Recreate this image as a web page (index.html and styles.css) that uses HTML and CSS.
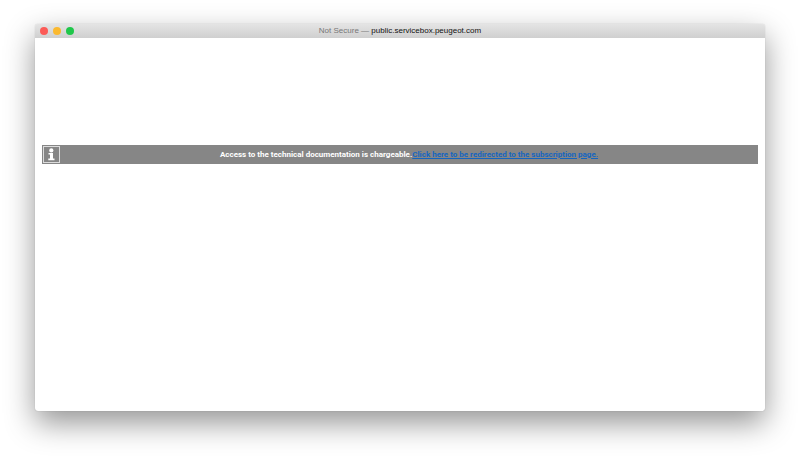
FILE: index.html
```
<!DOCTYPE html>
<html lang="en">
<head>
    <meta charset="UTF-8" />
    <meta name="viewport" content="width=device-width, initial-scale=1.0" />
    <title>public.servicebox.peugeot.com</title>
    <link rel="stylesheet" href="styles.css">
</head>
<body>

<div class="window">
    <header class="titlebar">
        <div class="controls">
            <button type="button" class="dot close" aria-label="Close"></button>
            <button type="button" class="dot minimize" aria-label="Minimize"></button>
            <button type="button" class="dot zoom" aria-label="Zoom"></button>
        </div>
        <div class="address"><span class="status">Not Secure —</span> public.servicebox.peugeot.com</div>
    </header>
    <main class="content">
        <div class="notice">
            <svg class="info-icon" viewBox="0 0 18 19" aria-hidden="true">
                <rect x="1.5" y="1.5" width="16" height="16" fill="none" stroke="#dcdcdc" />
                <circle cx="9.3" cy="5.4" r="2.1" fill="#fff" />
                <path d="M6.5 8h4.5v5.5h1.5V15.2H6.3v-1.7H8V9.5H6.5z" fill="#fff" />
            </svg>
            <p class="message">Access to the technical documentation is chargeable.<a href="#">Click here to be redirected to the subscription page.</a></p>
        </div>
    </main>
</div>

</body>
</html>
```
FILE: styles.css
```
* {
    box-sizing: border-box;
}
body {
    display: flex;
    min-height: 100vh;
    margin: 0;
    padding: 24px 35px 47px;
    background: #fff;
    font-family: Roboto, Arial, sans-serif;
}
.window {
    flex: 1;
    background: #fff;
    border-radius: 3px;
    box-shadow: 0 0 1px rgba(0, 0, 0, 0.3), 0 12px 30px rgba(0, 0, 0, 0.42);
}
.titlebar {
    display: grid;
    grid-template-columns: 1fr auto 1fr;
    align-items: center;
    height: 14px;
    padding: 0 5px;
    background: linear-gradient(#e4e4e4, #cfcfcf);
    border-radius: 3px 3px 0 0;
}
.controls {
    display: flex;
    gap: 5px;
}
.dot {
    width: 8px;
    height: 8px;
    padding: 0;
    border: none;
    border-radius: 50%;
}
.close {
    background: #fc5b57;
}
.minimize {
    background: #fbb92f;
}
.zoom {
    background: #1fc74a;
}
.address {
    color: #111;
    font-family: "Liberation Sans", Arial, sans-serif;
    font-size: 8px;
    line-height: 14px;
}
.status {
    color: #777;
}
.content {
    padding: 107px 7px 0;
}
.notice {
    display: flex;
    align-items: center;
    background: #868686;
}
.info-icon {
    width: 18px;
    height: 19px;
}
.message {
    flex: 1;
    margin: 0;
    color: #fff;
    font-size: 8px;
    font-weight: bold;
    line-height: 19px;
    text-align: center;
}
.message a {
    color: #1565c0;
}
```
